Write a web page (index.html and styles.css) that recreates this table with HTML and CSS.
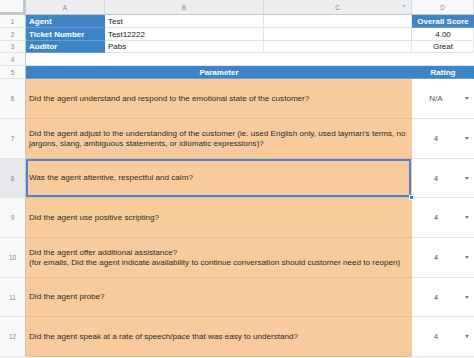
FILE: index.html
```html
<!DOCTYPE html>
<html>
<head>
<meta charset="utf-8">
<link rel="stylesheet" href="styles.css">
</head>
<body>
<div class="sheet">
  <div class="corner"></div>
  <div class="ch ch-sel">A</div>
  <div class="ch ch-sel">B</div>
  <div class="ch ch-sel ch-c">C<span class="cfilter"></span></div>
  <div class="ch">D</div>

  <div class="rh">1</div>
  <div class="c lbl">Agent</div>
  <div class="c val">Test</div>
  <div class="c"></div>
  <div class="c lbl ctr">Overall Score</div>

  <div class="rh">2</div>
  <div class="c lbl">Ticket Number</div>
  <div class="c val">Test12222</div>
  <div class="c"></div>
  <div class="c val ctr">4.00</div>

  <div class="rh">3</div>
  <div class="c lbl">Auditor</div>
  <div class="c val">Pabs</div>
  <div class="c"></div>
  <div class="c val ctr">Great</div>

  <div class="rh">4</div>
  <div class="c blank span4"></div>

  <div class="rh">5</div>
  <div class="c lbl ctr span3">Parameter</div>
  <div class="c lbl ctr">Rating</div>

  <div class="rh">6</div>
  <div class="c q span3">Did the agent understand and respond to the emotional state of the customer?</div>
  <div class="c rating"><span class="rv">N/A</span><span class="arrow"></span></div>

  <div class="rh">7</div>
  <div class="c q span3">Did the agent adjust to the understanding of the customer (ie. used English only, used layman's terms, no<br>jargons, slang, ambiguous statements, or idiomatic expressions)?</div>
  <div class="c rating"><span class="rv">4</span><span class="arrow"></span></div>

  <div class="rh rh-sel">8</div>
  <div class="c q span3 selected">Was the agent attentive, respectful and calm?<span class="handle"></span></div>
  <div class="c rating"><span class="rv">4</span><span class="arrow"></span></div>

  <div class="rh">9</div>
  <div class="c q span3">Did the agent use positive scripting?</div>
  <div class="c rating"><span class="rv">4</span><span class="arrow"></span></div>

  <div class="rh">10</div>
  <div class="c q span3">Did the agent offer additional assistance?<br>(for emails, Did the agent indicate availability to continue conversation should customer need to reopen)</div>
  <div class="c rating"><span class="rv">4</span><span class="arrow"></span></div>

  <div class="rh">11</div>
  <div class="c q span3">Did the agent probe?</div>
  <div class="c rating"><span class="rv">4</span><span class="arrow"></span></div>

  <div class="rh">12</div>
  <div class="c q span3">Did the agent speak at a rate of speech/pace that was easy to understand?</div>
  <div class="c rating"><span class="rv">4</span><span class="arrow"></span></div>
</div>
</body>
</html>
```

FILE: styles.css
```css
html, body {
  margin: 0;
  padding: 0;
  background: #ffffff;
  overflow: hidden;
}

.sheet {
  display: grid;
  grid-template-columns: 26px 79px 159px 148px 62px;
  grid-template-rows: 15px 13px 13px 12px 13px 13px 40px 40px 39px 40px 40px 39px 40px;
  width: 474px;
  font-family: "Liberation Sans", Arial, sans-serif;
  font-size: 8px;
  color: #222222;
}

.sheet > div {
  box-sizing: border-box;
  min-width: 0;
}

.corner {
  background: #f8f9fa;
  border-right: 3px solid #c4c7c5;
  border-bottom: 3px solid #c4c7c5;
}

.ch {
  background: #f8f9fa;
  border-right: 1px solid #d9dadb;
  border-bottom: 1px solid #c4c7c5;
  color: #80868b;
  font-size: 6.5px;
  display: flex;
  align-items: center;
  justify-content: center;
  position: relative;
}

.ch-sel {
  background: #eceef0;
}

.cfilter {
  position: absolute;
  right: 5px;
  top: 5px;
  width: 0;
  height: 0;
  border-left: 2px solid transparent;
  border-right: 2px solid transparent;
  border-top: 2.5px solid #b0b3b6;
}

.rh {
  background: #f8f9fa;
  border-right: 1px solid #c4c7c5;
  border-bottom: 1px solid #e2e3e3;
  color: #80868b;
  font-size: 6.5px;
  display: flex;
  align-items: center;
  justify-content: center;
}

.rh-sel {
  background: #e6e8eb;
}

.c {
  border-right: 1px solid #e2e3e3;
  border-bottom: 1px solid #e2e3e3;
  display: flex;
  align-items: center;
  padding: 0 2px 0 3px;
  white-space: nowrap;
  overflow: hidden;
}

.lbl {
  background: #3d85c6;
  color: #ffffff;
  font-weight: bold;
  font-size: 8px;
  border-right-color: #3d85c6;
  border-bottom-color: #6a9fd2;
}

.val {
  color: #222222;
  font-size: 8px;
}

.ctr {
  justify-content: center;
}

.blank {
  border-right: none;
}

.span3 {
  grid-column: span 3;
}

.span4 {
  grid-column: span 4;
}

.q {
  background: #f9cb9c;
  border-right-color: #f9cb9c;
  border-bottom-color: #e8bd92;
  color: #2b2b2b;
  font-size: 8.1px;
  line-height: 9.5px;
  position: relative;
  overflow: visible;
}

.selected {
  box-shadow: inset 0 0 0 2px #4d82d6;
  z-index: 2;
}

.handle {
  position: absolute;
  right: -3px;
  bottom: -3px;
  width: 5px;
  height: 5px;
  background: #3f7ee0;
  border: 1px solid #ffffff;
  box-sizing: border-box;
}

.rating {
  justify-content: flex-start;
  padding: 0;
  border-right: none;
  color: #555555;
}

.rv {
  width: 48px;
  text-align: center;
}

.arrow {
  width: 0;
  height: 0;
  margin-left: 5px;
  border-left: 2.5px solid transparent;
  border-right: 2.5px solid transparent;
  border-top: 3px solid #7a7a7a;
}
```
